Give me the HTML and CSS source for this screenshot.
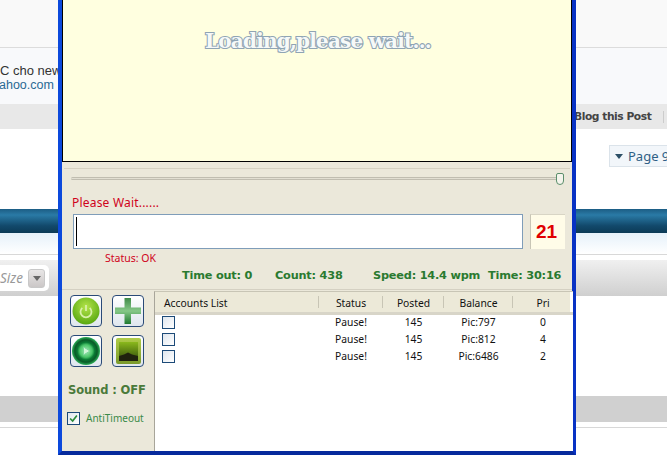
FILE: index.html
```html
<!DOCTYPE html>
<html lang="en">
<head>
<meta charset="utf-8">
<title>Loading</title>
<link rel="stylesheet" href="styles.css">
</head>
<body>
<div class="page">
  <div class="band top"></div>
  <div class="band msg">
    <p class="msg-line">C cho new</p>
    <p class="msg-link">ahoo.com</p>
  </div>
  <div class="band tools"><span class="blog">Blog this Post</span><span class="tool-sep"></span></div>
  <div class="band pager"><div class="page-box"><span class="caret"></span>Page 9</div></div>
  <div class="band dark"></div>
  <div class="band fade"></div>
  <div class="band sizebar"><div class="size-box"><span class="size">Size</span><span class="size-btn"><span class="caret small"></span></span></div></div>
  <div class="band blank"></div>
  <div class="band greybar"></div>
  <div class="band rest"></div>
</div>

<div class="window">
  <div class="loading"><span class="loading-text">Loading,please wait...</span></div>
  <div class="upper">
    <div class="slider"><span class="thumb"></span></div>
    <div class="wait">Please Wait......</div>
    <div class="inputs">
      <div class="entry"><span class="text-caret"></span></div>
      <div class="count">21</div>
    </div>
    <div class="status">Status: OK</div>
    <div class="stats">
      <span class="stat s1">Time out: 0</span>
      <span class="stat s2">Count: 438</span>
      <span class="stat s3">Speed: 14.4 wpm</span>
      <span class="stat s4">Time: 30:16</span>
    </div>
  </div>
  <div class="lower">
    <div class="side">
      <div class="btns">
        <div class="btn">
          <svg viewBox="0 0 32 32" width="32" height="32"><defs><radialGradient id="g1" cx="50%" cy="35%" r="65%"><stop offset="0" stop-color="#b4e44a"/><stop offset="1" stop-color="#58a810"/></radialGradient></defs><circle cx="16" cy="16" r="13.500" fill="url(#g1)"/><path d="M12.300 12.800a5.500 5.500 0 1 0 7.400 0" fill="none" stroke="#d8f0a8" stroke-width="1.800"/><path d="M16 10v6" stroke="#d8f0a8" stroke-width="1.800"/></svg>
        </div>
        <div class="btn">
          <svg viewBox="0 0 32 32" width="32" height="32"><defs><linearGradient id="g2" x1="0" y1="0" x2="0" y2="1"><stop offset="0" stop-color="#3f8a48"/><stop offset=".5" stop-color="#86c888"/><stop offset="1" stop-color="#1f7a30"/></linearGradient></defs><path d="M12.500 3h6.500v9.500h10v6.500h-10v10h-6.500v-10h-9.500v-6.500h9.500z" fill="url(#g2)"/></svg>
        </div>
        <div class="btn">
          <svg viewBox="0 0 32 32" width="32" height="32"><defs><radialGradient id="g3" cx="50%" cy="50%" r="50%"><stop offset="0" stop-color="#a8ecb8"/><stop offset=".45" stop-color="#48c468"/><stop offset=".62" stop-color="#0a7a34"/><stop offset=".8" stop-color="#0a5a28"/><stop offset="1" stop-color="#2cb058"/></radialGradient></defs><circle cx="16" cy="16" r="14" fill="url(#g3)"/><path d="M13.500 12l6.500 4-6.500 4z" fill="#d0f6d8" stroke="#7ad89a"/></svg>
        </div>
        <div class="btn">
          <svg viewBox="0 0 32 32" width="32" height="32"><defs><linearGradient id="g4" x1="0" y1="0" x2="0" y2="1"><stop offset="0" stop-color="#b0cc48"/><stop offset="1" stop-color="#7a9a2c"/></linearGradient><linearGradient id="g5" x1="0" y1="0" x2="0" y2="1"><stop offset="0" stop-color="#8ab81c"/><stop offset=".7" stop-color="#4a6a10"/><stop offset="1" stop-color="#34480c"/></linearGradient></defs><rect x="4" y="3" width="25" height="26" rx="2" fill="url(#g4)"/><rect x="7" y="7" width="19" height="19" fill="url(#g5)"/><path d="M7 26v-5l5-1.500 4-2 4 2 6 1.500v5z" fill="#20220e"/></svg>
        </div>
      </div>
      <div class="sound">Sound : OFF</div>
      <label class="anti"><span class="check on"><svg viewBox="0 0 13 13" width="11" height="11"><path d="M2.500 6.500l3 3 5-6.500" fill="none" stroke="#2a8a3a" stroke-width="2"/></svg></span>AntiTimeout</label>
    </div>
    <div class="list">
      <div class="row head">
        <span class="c name">Accounts List</span><span class="c st">Status</span><span class="c po">Posted</span><span class="c ba">Balance</span><span class="c pr">Pri</span>
      </div>
      <div class="row"><span class="c name"><span class="check"></span></span><span class="c st">Pause!</span><span class="c po">145</span><span class="c ba">Pic:797</span><span class="c pr">0</span></div>
      <div class="row"><span class="c name"><span class="check"></span></span><span class="c st">Pause!</span><span class="c po">145</span><span class="c ba">Pic:812</span><span class="c pr">4</span></div>
      <div class="row"><span class="c name"><span class="check"></span></span><span class="c st">Pause!</span><span class="c po">145</span><span class="c ba">Pic:6486</span><span class="c pr">2</span></div>
    </div>
  </div>
</div>
</body>
</html>
```
FILE: styles.css
```css
* { box-sizing: border-box; }
html, body { margin: 0; padding: 0; height: 100%; overflow: hidden; background: #fff; }
body { font-family: "Noto Sans", "Liberation Sans", sans-serif; font-size: 11px; color: #111; }

/* background page */
.page { display: flex; flex-direction: column; width: 667px; height: 467px; overflow: hidden; }
.band { flex: none; width: 100%; }
.top { height: 48px; background: #f9f9f9; border-bottom: 1px solid #dcdcdc; }
.msg { height: 56px; background: #f8f9fb; padding-top: 15px; font-family: "Liberation Sans", sans-serif; font-size: 13px; line-height: 15px; color: #333; }
.msg p { margin: 0; white-space: nowrap; }
.msg-link { color: #2a6a94; font-size: 12.500px; margin-left: -1px !important; }
.tools { height: 25px; background: #e8e8e8; display: flex; align-items: center; padding-left: 574px; padding-top: 1px; }
.blog { font: bold 10.700px/24px "DejaVu Sans", sans-serif; letter-spacing: -.45px; color: #444; white-space: nowrap; }
.tool-sep { width: 1px; height: 12px; background: #ccc; margin-left: 12px; }
.pager { height: 80px; background: #fff; padding: 16px 0 0 609px; }
.page-box { width: 60px; height: 22px; background: #f2f6fa; border: 1px solid #dbe3ea; border-right: 0; display: flex; align-items: center; padding-left: 5px; font-size: 13px; color: #2f5f85; white-space: nowrap; }
.caret { width: 0; height: 0; border: 4px solid transparent; border-top: 5px solid #2c4f66; border-bottom: 0; margin-right: 5px; }
.caret.small { margin: 0; border-top-color: #666; }
.dark { height: 24px; background: linear-gradient(#1c5d84, #2a7aa6 25%, #12496b 70%, #0c3a56); }
.fade { height: 22px; background: linear-gradient(#e6f1fa, #fff); border-bottom: 1px solid #d8d8d8; }
.sizebar { height: 36px; margin-top: 5px; background: linear-gradient(#f0f0f0, #cfcfcf); padding-top: 5px; }
.size-box { width: 49px; height: 26px; background: #fff; border-radius: 0 5px 5px 0; display: flex; align-items: center; }
.size { font-style: italic; font-size: 13.500px; color: #999; width: 28px; flex: none; }
.size-btn { width: 17px; height: 19px; border-radius: 3px; background: linear-gradient(#e8e6e6, #cbc7c7); border: 1px solid #c8c8c8; display: flex; align-items: center; justify-content: center; }
.blank { height: 100px; background: #fff; }
.greybar { height: 26px; background: #d0d0d0; }
.rest { height: 45px; margin-top: 5px; background: #fff; border-top: 1px solid #d8d8d8; }

/* application window */
.window {
  position: absolute; left: 58px; top: 0; width: 518px; height: 455px;
  border: 4px solid #0832c4; border-top: 0; border-left-color: #0c49dc; border-bottom-color: #062a9c;
  background: #ebe8da; display: flex; flex-direction: column;
}
.loading { height: 162px; background: #ffffe0; border: 0 solid #000; border-width: 0 1px 1px 1px; padding-top: 28px; text-align: center; flex: none; }
.loading-text {
  font: bold 20px/26px "DejaVu Serif", serif; letter-spacing: -.8px; color: #f6f9f8;
  -webkit-text-stroke: 2.200px #8fa4b4; paint-order: stroke fill; white-space: nowrap; margin-right: -2px;
}
.upper { height: 128px; flex: none; padding: 6px 2px 0; margin: 0 0 1px; position: relative; border-bottom: 1px solid #d4d0c2; }
.upper::before { content: ""; display: block; height: 1px; background: #d6d2c2; margin-bottom: 8px; }
.slider { position: relative; height: 3px; margin: 0 10px 0 7px; background: #e2dfd2; border: 1px solid #c0bdb0; border-width: 1px 0; border-radius: 2px; }
.thumb { position: absolute; right: -4px; top: -5px; width: 8px; height: 12px; background: #f4f4ec; border: 1px solid #5b8f6c; border-radius: 2px 2px 4px 4px; }
.wait { margin: 15px 0 0 8px; color: #d0021b; font-size: 12px; letter-spacing: .2px; line-height: 16px; }
.inputs { display: flex; margin: 3px 0 0 9px; gap: 7px; }
.entry { width: 450px; height: 35px; background: #fff; border: 1px solid #7f9db9; padding: 2px 0 0 2px; }
.text-caret { display: block; width: 1px; height: 29px; background: #000; }
.count { width: 35px; height: 35px; background: #fffce8; border-left: 1px solid #c8c5b5; border-top: 1px solid #d8d5c5; color: #e00000; font: bold 19px/33px "Liberation Sans", sans-serif; text-align: center; padding-right: 3px; }
.status { margin: 2px 0 0 41px; color: #d0021b; font-size: 10.500px; line-height: 14px; }
.stats { position: relative; height: 18px; margin-top: 2px; }
.stat { position: absolute; top: 0; font: bold 11.300px/18px "DejaVu Sans", sans-serif; letter-spacing: -.2px; color: #2a7a30; white-space: nowrap; }
.s1 { left: 118px; }
.s2 { left: 211px; }
.s3 { left: 309px; }
.s4 { left: 424px; }
.lower { flex: 1; display: flex; min-height: 0; }
.side { width: 92px; flex: none; padding: 4px 0 0 8px; }
.btns { display: grid; grid-template-columns: 32px 32px; gap: 8px 10px; }
.btn { width: 32px; height: 32px; border: 1px solid #2a4a78; border-radius: 4px; background: linear-gradient(#fff, #dfe6ee); overflow: hidden; display: flex; align-items: center; justify-content: center; }
.btn svg { flex: none; }
.sound { margin: 15px 0 0 -2px; font: bold 11.500px/16px "DejaVu Sans", sans-serif; letter-spacing: -.1px; color: #4a7a3a; white-space: nowrap; }
.anti { display: flex; align-items: center; gap: 6px; margin: 13px 0 0 -3px; color: #3a8a48; font-size: 10px; line-height: 14px; white-space: nowrap; }
.check { display: flex; align-items: center; justify-content: center; width: 13px; height: 13px; border: 1px solid #1c4a78; background: linear-gradient(135deg, #dfe6ee, #fff); flex: none; }
.list { flex: 1; background: #fff; border-left: 1px solid #a8a59a; border-top: 1px solid #c8c5b5; }
.row { display: grid; grid-template-columns: 164px 64px 61px 69px 60px; height: 17px; line-height: 17px; align-items: center; font-size: 10.300px; }
.row.head { height: 23px; line-height: 22px; background: linear-gradient(to right, #ece9d8 415px, #fff 415px); border-bottom: 3px solid #d8d5c8; color: #111; margin-bottom: -1px; }
.c { text-align: center; height: 100%; }
.name { text-align: left; padding-left: 7px; display: flex; align-items: center; }
.head .name { padding-left: 9px; }
.head .c { position: relative; }
.head .c + .c::before { content: ""; position: absolute; left: -1px; top: 4px; width: 1px; height: 12px; background: #c8c5b5; }
```
